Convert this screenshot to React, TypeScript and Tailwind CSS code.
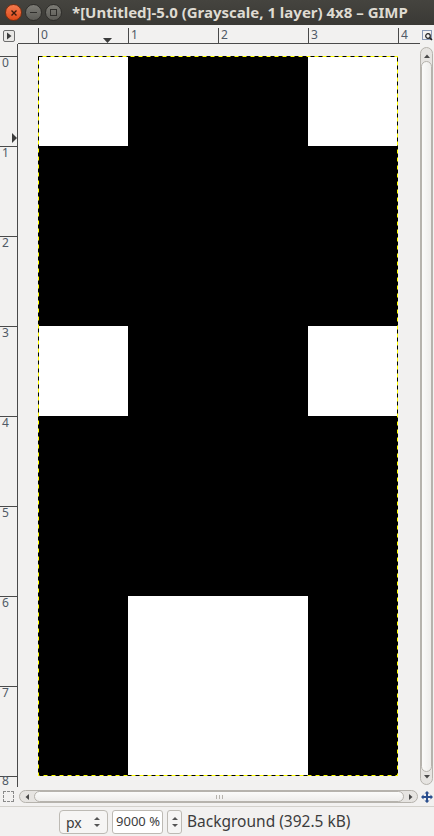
import React from "react";

const FONT = { fontFamily: '"Noto Sans", "DejaVu Sans", sans-serif' };

// 4x8 grayscale image, 1 = white
const PIXELS = [
  [1, 0, 0, 1],
  [0, 0, 0, 0],
  [0, 0, 0, 0],
  [1, 0, 0, 1],
  [0, 0, 0, 0],
  [0, 0, 0, 0],
  [0, 1, 1, 0],
  [0, 1, 1, 0],
];

const TitleBar = () => (
  <div className="h-[25px] flex items-center bg-gradient-to-b from-[#45443f] to-[#3a3935] shrink-0">
    <div className="flex items-center gap-[3px] pl-[5px]">
      <div className="w-[17px] h-[17px] rounded-full bg-gradient-to-b from-[#f47a4d] to-[#df4a16] border border-[#7a2e10] flex items-center justify-center">
        <svg width="8" height="8" viewBox="0 0 8 8">
          <path d="M1.5 1.5 L6.5 6.5 M6.5 1.5 L1.5 6.5" stroke="#3b1a0c" strokeWidth="1.4" />
        </svg>
      </div>
      <div className="w-[17px] h-[17px] rounded-full bg-gradient-to-b from-[#7d7c76] to-[#5c5b56] border border-[#2e2d2a] flex items-center justify-center">
        <div className="w-[7px] h-[1.5px] bg-[#2f2e2b]" />
      </div>
      <div className="w-[17px] h-[17px] rounded-full bg-gradient-to-b from-[#7d7c76] to-[#5c5b56] border border-[#2e2d2a] flex items-center justify-center">
        <div className="w-[7px] h-[7px] border border-[#2f2e2b]" />
      </div>
    </div>
    <div className="ml-[10px] text-[15px] font-bold text-[#dfdbd2] leading-none whitespace-nowrap">
      *[Untitled]-5.0 (Grayscale, 1 layer) 4x8 – GIMP
    </div>
  </div>
);

const TopRuler = () => (
  <svg width="402" height="19" className="block">
    <line x1="0" y1="18.5" x2="402" y2="18.5" stroke="#4a4a4a" />
    {[0, 1, 2, 3, 4].map((n) => (
      <g key={n}>
        <line x1={20.5 + n * 90} y1="3" x2={20.5 + n * 90} y2="18" stroke="#4a4a4a" />
        <text x={23 + n * 90} y="14" fontSize="12" fill="#505a66" style={FONT}>
          {n}
        </text>
      </g>
    ))}
    <polygon points="85,13 94,13 89.5,18" fill="#3c3c3c" />
  </svg>
);

const LeftRuler = () => (
  <svg width="18" height="743" className="block overflow-visible">
    <line x1="17.5" y1="0" x2="17.5" y2="743" stroke="#4a4a4a" />
    {[0, 1, 2, 3, 4, 5, 6, 7, 8].map((n) => (
      <g key={n}>
        <line x1="0" y1={12.5 + n * 90} x2="17" y2={12.5 + n * 90} stroke="#4a4a4a" />
        <text x="2" y={n === 8 ? 741 : 23 + n * 90} fontSize="12" fill="#505a66" style={FONT}>
          {n}
        </text>
      </g>
    ))}
    <polygon points="12,89 12,99 17,94" fill="#3c3c3c" />
  </svg>
);

const Canvas = () => (
  <div className="flex-1 bg-[#f2f1f0] pl-[20px] pt-[12px] overflow-hidden">
    <div className="relative w-[360px] h-[720px] grid grid-cols-4">
      {PIXELS.flat().map((p, i) => (
        <div key={i} className={p ? "h-[90px] bg-white" : "h-[90px] bg-black"} />
      ))}
      <svg width="360" height="720" className="absolute inset-0 pointer-events-none">
        <rect x="0.5" y="0.5" width="359" height="719" fill="none" stroke="#ffff00" />
        <rect x="0.5" y="0.5" width="359" height="719" fill="none" stroke="#000" strokeDasharray="4 4" />
      </svg>
    </div>
  </div>
);

const VScroll = () => (
  <div className="w-[14px] pt-[3px] pb-[2px] pr-[1px] flex">
    <div className="flex-1 flex flex-col items-center rounded-full border border-[#b6b3ad] bg-[#e6e4e1]">
      <svg width="8" height="10" className="mt-[3px] shrink-0">
        <polygon points="1,7 7,7 4,3.5" fill="#4a4a4a" />
      </svg>
      <div className="flex-1 w-[11px] rounded-full border border-[#b6b3ad] bg-gradient-to-r from-[#fbfbfa] to-[#eeedeb]" />
      <svg width="8" height="10" className="mb-[2px] shrink-0">
        <polygon points="1,3 7,3 4,6.5" fill="#4a4a4a" />
      </svg>
    </div>
  </div>
);

const HScroll = () => (
  <div className="flex-1 pt-[3px] pb-[3px] pl-[1px] pr-[2px] flex">
    <div className="flex-1 flex items-center rounded-full border border-[#b6b3ad] bg-[#e6e4e1]">
      <svg width="12" height="8" className="ml-[2px] shrink-0">
        <polygon points="7,1 7,7 3.5,4" fill="#4a4a4a" />
      </svg>
      <div className="flex-1 h-[11px] rounded-full border border-[#b6b3ad] bg-gradient-to-b from-[#fbfbfa] to-[#eeedeb] flex items-center justify-center">
        <div className="flex gap-[2px]">
          <div className="w-px h-[4px] bg-[#b6b3ad]" />
          <div className="w-px h-[4px] bg-[#b6b3ad]" />
          <div className="w-px h-[4px] bg-[#b6b3ad]" />
        </div>
      </div>
      <svg width="12" height="8" className="mr-[1px] shrink-0">
        <polygon points="5,1 5,7 8.5,4" fill="#4a4a4a" />
      </svg>
    </div>
  </div>
);

const NavIcon = () => (
  <svg width="14" height="14" viewBox="0 0 14 14">
    <path d="M7 1 L9.5 3.5 H8 V6 H10.5 V4.5 L13 7 L10.5 9.5 V8 H8 V10.5 H9.5 L7 13 L4.5 10.5 H6 V8 H3.5 V9.5 L1 7 L3.5 4.5 V6 H6 V3.5 H4.5 Z" fill="#2b4f8e" />
  </svg>
);

const Spin = () => (
  <svg width="8" height="14" viewBox="0 0 8 14">
    <polygon points="1,5 7,5 4,2" fill="#555" />
    <polygon points="1,9 7,9 4,12" fill="#555" />
  </svg>
);

export default function App() {
  return (
    <div className="w-[434px] h-[836px] flex flex-col bg-[#f2f1f0] overflow-hidden" style={FONT}>
      <TitleBar />
      <div className="h-[19px] flex shrink-0">
        <div className="w-[18px] flex items-start pl-[3px] pt-[5px]">
          <div className="w-[12px] h-[12px] rounded-[2px] border border-[#6e6e6e] bg-[#e9e8e6] flex items-center justify-center">
            <svg width="6" height="8" viewBox="0 0 6 8">
              <polygon points="1,0.5 1,7.5 5.5,4" fill="#3c3c3c" />
            </svg>
          </div>
        </div>
        <TopRuler />
        <div className="w-[14px] flex items-start pt-[5px] pl-[2px]">
          <svg width="11" height="11" viewBox="0 0 11 11">
            <rect x="0.5" y="0.5" width="9" height="9" fill="none" stroke="#1d3f7a" strokeDasharray="1 1" />
            <circle cx="6" cy="6" r="2.3" fill="none" stroke="#222" strokeWidth="1.2" />
            <line x1="7.6" y1="7.6" x2="10" y2="10" stroke="#222" strokeWidth="1.5" />
          </svg>
        </div>
      </div>
      <div className="flex h-[743px] shrink-0">
        <LeftRuler />
        <Canvas />
        <VScroll />
      </div>
      <div className="h-[19px] flex shrink-0">
        <div className="w-[18px] flex items-center pl-[3px]">
          <div className="w-[11px] h-[11px] border border-dashed border-[#8a8a8a]" />
        </div>
        <HScroll />
        <div className="w-[14px] flex items-center justify-center">
          <NavIcon />
        </div>
      </div>
      <div className="flex-1 border-t border-[#d3d1cc] flex items-center pl-[59px] gap-[4px] pt-[1px]">
        <div className="w-[49px] h-[24px] rounded-[4px] border border-[#bdbab4] bg-[#f6f5f4] flex items-center justify-between px-[6px] text-[14px] text-[#3c3c3c]">
          <span>px</span>
          <Spin />
        </div>
        <div className="w-[51px] h-[24px] rounded-[3px] border border-[#bdbab4] bg-white flex items-center justify-end pr-[2px] text-[13px] text-[#3c3c3c]">
          9000 %
        </div>
        <div className="w-[15px] h-[24px] rounded-[3px] border border-[#bdbab4] bg-[#f6f5f4] flex items-center justify-center">
          <Spin />
        </div>
        <div className="ml-[1px] text-[15.5px] text-[#3c3c3c] whitespace-nowrap">Background (392.5 kB)</div>
      </div>
    </div>
  );
}
